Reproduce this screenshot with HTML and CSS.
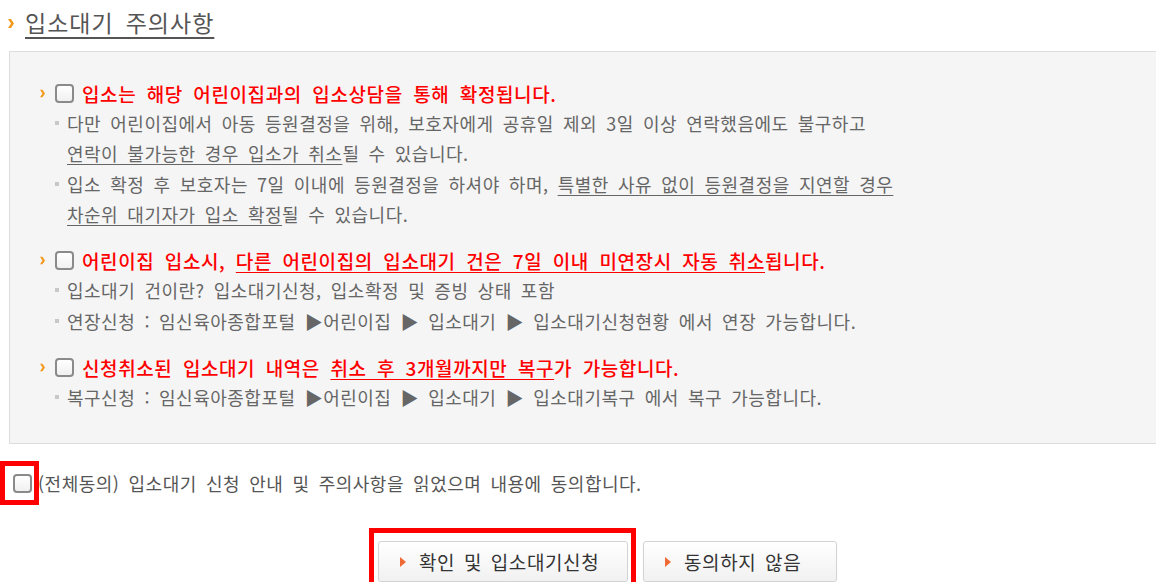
FILE: index.html
```html
<!DOCTYPE html>
<html lang="ko">
<head>
    <meta charset="UTF-8">
    <meta name="viewport" content="width=device-width, initial-scale=1.0">
    <title>입소대기 주의사항</title>
    <link rel="stylesheet" href="styles.css">
</head>
<body>
<div class="page">
    <h3 class="title">
        <svg class="chev chev-title" width="6" height="9" viewBox="0 0 6 9"><path d="M0 0h3l3 4.5L3 9H0l3-4.5z"/></svg>
        <span>입소대기 주의사항</span>
    </h3>

    <div class="notice">
        <div class="item">
            <div class="item-head">
                <svg class="chev" width="5" height="9" viewBox="0 0 6 9"><path d="M0 0h3l3 4.5L3 9H0l3-4.5z"/></svg>
                <input type="checkbox" class="chk">
                <span class="head-text">입소는 해당 어린이집과의 입소상담을 통해 확정됩니다.</span>
            </div>
            <ul class="sub">
                <li>다만 어린이집에서 아동 등원결정을 위해, 보호자에게 공휴일 제외 3일 이상 연락했음에도 불구하고<br><u>연락이 불가능한 경우 입소가 취소</u>될 수 있습니다.</li>
                <li>입소 확정 후 보호자는 7일 이내에 등원결정을 하셔야 하며, <u>특별한 사유 없이 등원결정을 지연할 경우<br>차순위 대기자가 입소 확정</u>될 수 있습니다.</li>
            </ul>
        </div>

        <div class="item">
            <div class="item-head">
                <svg class="chev" width="5" height="9" viewBox="0 0 6 9"><path d="M0 0h3l3 4.5L3 9H0l3-4.5z"/></svg>
                <input type="checkbox" class="chk">
                <span class="head-text">어린이집 입소시, <u>다른 어린이집의 입소대기 건은 7일 이내 미연장시 자동 취소</u>됩니다.</span>
            </div>
            <ul class="sub">
                <li>입소대기 건이란? 입소대기신청, 입소확정 및 증빙 상태 포함</li>
                <li>연장신청 : 임신육아종합포털 ▶어린이집 ▶ 입소대기 ▶ 입소대기신청현황 에서 연장 가능합니다.</li>
            </ul>
        </div>

        <div class="item">
            <div class="item-head">
                <svg class="chev" width="5" height="9" viewBox="0 0 6 9"><path d="M0 0h3l3 4.5L3 9H0l3-4.5z"/></svg>
                <input type="checkbox" class="chk">
                <span class="head-text">신청취소된 입소대기 내역은 <u>취소 후 3개월까지만 복구</u>가 가능합니다.</span>
            </div>
            <ul class="sub">
                <li>복구신청 : 임신육아종합포털 ▶어린이집 ▶ 입소대기 ▶ 입소대기복구 에서 복구 가능합니다.</li>
            </ul>
        </div>
    </div>

    <div class="agree">
        <span class="mark mark-chk"><input type="checkbox" class="chk" id="agreeAll"></span>
        <label for="agreeAll">(전체동의) 입소대기 신청 안내 및 주의사항을 읽었으며 내용에 동의합니다.</label>
    </div>

    <div class="btns">
        <span class="mark mark-btn">
            <button class="btn btn-ok"><i class="tri"></i>확인 및 입소대기신청</button>
        </span>
        <button class="btn btn-no"><i class="tri"></i>동의하지 않음</button>
    </div>
</div>
</body>
</html>
```

FILE: styles.css
```css
body { margin: 0; overflow: hidden; background: #fff; font-family: "Noto Sans CJK KR", "Noto Sans", sans-serif; color: #666; }
.page { width: 1215px; }

.chev { fill: #f39a1e; flex: none; }

.title { margin: 0; padding: 6px 0 0 8px; display: flex; align-items: center; gap: 11px; font-size: 23px; font-weight: normal; line-height: 32px; color: #555; letter-spacing: 1px; word-spacing: 0.2em; }
.title span { text-decoration: underline; text-decoration-thickness: 2px; text-underline-offset: 5px; }
.chev-title { margin-top: 2px; }

.notice { margin: 13px 0 0 9px; background: #f5f5f5; border: 1px solid #ddd; padding: 27px 0 31px 30px; }
.item + .item { margin-top: 17px; }
.item-head { display: flex; align-items: center; height: 28px; }
.item-head .chev { margin-right: 10px; }
.head-text { margin-left: 8px; font-size: 19px; font-weight: 500; color: #f00; letter-spacing: 0.6px; word-spacing: 0.24em; white-space: nowrap; }
.head-text u { text-underline-offset: 3px; }

.chk { appearance: none; -webkit-appearance: none; margin: 0; width: 19px; height: 19px; border: 2px solid #8a8a8a; border-radius: 4px; background: linear-gradient(#fff, #f0f0f0); flex: none; }

.sub { list-style: none; margin: 0 0 0 15px; padding: 0; }
.sub li { position: relative; padding-left: 12px; margin-top: 1px; font-size: 18px; line-height: 30px; color: #666; letter-spacing: 0.5px; word-spacing: 0.2em; white-space: nowrap; }
.sub li::before { content: ""; position: absolute; left: 0; top: 13px; width: 4px; height: 4px; background: #c8c8c8; }
.sub u { text-underline-offset: 3px; }

.agree { display: flex; align-items: center; gap: 6px; margin-top: 24px; padding-left: 13px; height: 30px; font-size: 18px; color: #555; letter-spacing: 0.5px; word-spacing: 0.2em; }

.mark { position: relative; display: inline-flex; }
.mark::after { content: ""; position: absolute; border: 5px solid #f00; pointer-events: none; }
.mark-chk::after { left: -13px; right: -7px; top: -13px; bottom: -12px; }
.mark-btn::after { left: -9px; right: -8px; top: -13px; bottom: -6px; }

.btns { display: flex; justify-content: center; gap: 15px; margin-top: 43px; }
.btn { display: inline-flex; align-items: center; height: 41px; padding: 0 0 0 21px; border: 1px solid #d3d3d3; border-radius: 3px; background: linear-gradient(#fff, #f1f1f1); box-shadow: 0 1px 1px rgba(0,0,0,0.08); font-family: inherit; font-size: 19px; color: #333; letter-spacing: 0.6px; word-spacing: 0.15em; }
.btn-ok { width: 250px; }
.btn-no { width: 194px; }
.tri { width: 0; height: 0; border-top: 5px solid transparent; border-bottom: 5px solid transparent; border-left: 6px solid #ef6a36; margin-right: 13px; }
```
